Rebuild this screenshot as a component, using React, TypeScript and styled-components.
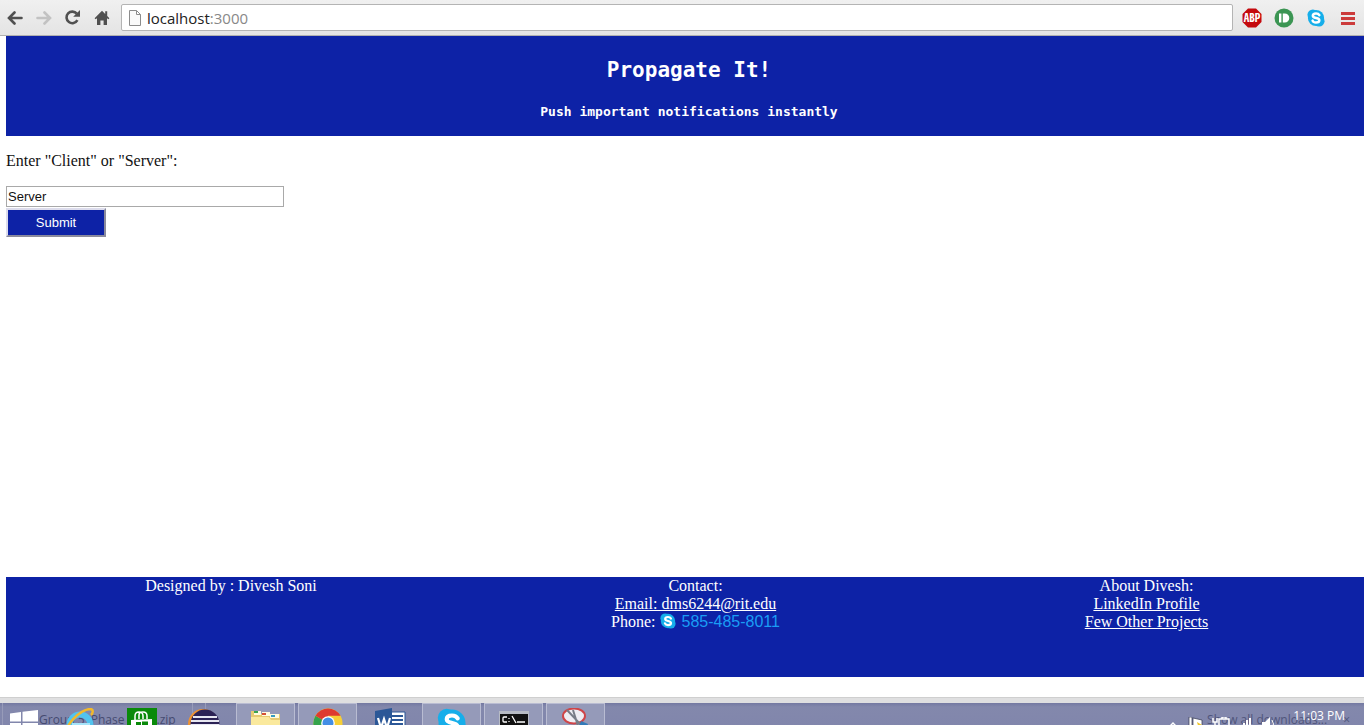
import React from "react";
import styled, { createGlobalStyle } from "styled-components";

const BLUE = "#0d22a6";

const GlobalStyle = createGlobalStyle`
  * { box-sizing: border-box; }
  body {
    margin: 0;
    background: #fff;
    color: #111;
    font: 16px/18px "Liberation Serif", serif;
  }
  svg { display: block; }
`;

const Screen = styled.div`
  display: flex;
  flex-direction: column;
  height: 100vh;
  overflow: hidden;
`;

/* Browser toolbar */
const Toolbar = styled.nav`
  display: flex;
  align-items: center;
  flex: none;
  height: 36px;
  background: linear-gradient(#f0f0f0, #e4e4e4);
  border-bottom: 1px solid #b0b0b0;
`;

const ToolButton = styled.button`
  display: flex;
  align-items: center;
  justify-content: center;
  width: 29px;
  height: 24px;
  padding: 0;
  border: 0;
  background: none;
`;

const AddressBar = styled.div`
  display: flex;
  align-items: center;
  flex: 1;
  height: 27px;
  margin: 0 4px 0 5px;
  padding-left: 7px;
  gap: 6px;
  border: 1px solid #b4b4b4;
  border-radius: 2px;
  background: #fff;
`;

const Address = styled.span`
  flex: 1;
  font: 15px/20px "Open Sans", sans-serif;
  color: #222;
`;

const Port = styled.span`
  color: #888;
`;

const Extensions = styled.div`
  display: flex;
  gap: 3px;
  padding-right: 2px;
`;

/* Web page */
const Page = styled.div`
  display: flex;
  flex-direction: column;
  flex: 1;
  min-height: 0;
  padding: 0 0 20px 6px;
`;

const Banner = styled.header`
  flex: none;
  height: 100px;
  padding: 20px 0 0 8px;
  background: ${BLUE};
  color: #fff;
  text-align: center;
  font-family: "DejaVu Sans Mono", monospace;
`;

const Title = styled.h1`
  margin: 0;
  font-size: 21px;
  line-height: 28px;
  font-weight: 700;
`;

const Tagline = styled.p`
  margin: 18px 0 0;
  font-size: 13px;
  line-height: 20px;
  font-weight: 700;
`;

const Form = styled.form`
  display: flex;
  flex-direction: column;
  align-items: flex-start;
  flex: 1;
  padding-top: 16px;
`;

const RoleInput = styled.input`
  width: 278px;
  height: 21px;
  margin-top: 16px;
  padding: 1px;
  border: 1px solid #a9a9a9;
  font: 13px "Liberation Sans", sans-serif;
  color: #111;
`;

const Submit = styled.button`
  width: 100px;
  height: 29px;
  margin-top: 1px;
  padding: 0;
  border: 2px solid;
  border-color: #dcdcec #8a8a9c #8a8a9c #dcdcec;
  background: ${BLUE};
  color: #fff;
  font: 13px "Liberation Sans", sans-serif;
`;

const Footer = styled.footer`
  display: grid;
  grid-template-columns: 450fr 479fr 423fr;
  flex: none;
  height: 100px;
  padding-right: 6px;
  background: ${BLUE};
  color: #fff;
  text-align: center;
`;

const Column = styled.div`
  display: flex;
  flex-direction: column;
  align-items: center;
`;

const PageLink = styled.a`
  color: #fff;
`;

const PhoneLine = styled.div`
  display: flex;
  gap: 4px;
`;

const PhoneLink = styled.a`
  display: flex;
  gap: 6px;
  color: #1a9cf5;
  font-family: "Liberation Sans", sans-serif;
  text-decoration: none;
`;

/* Download shelf edge and desktop taskbar */
const Shelf = styled.div`
  flex: none;
  height: 6px;
  background: #dfdfe0;
  border-top: 1px solid #cfcfcf;
`;

const Taskbar = styled.footer`
  display: flex;
  position: relative;
  flex: none;
  height: 22px;
  overflow: hidden;
  background: linear-gradient(#7479a2, #8388ac 4px, #8186ac);
  font: 12px/16px "Open Sans", sans-serif;
`;

const ShelfGhost = styled.div`
  position: absolute;
  top: 0;
  left: 2px;
  width: 204px;
  height: 30px;
  padding: 9px 0 0 36px;
  border: 1px solid #979bb9;
  border-top: 0;
  color: #454a70;
  white-space: pre;
  &::after {
    content: "";
    position: absolute;
    top: 0;
    right: 12px;
    height: 30px;
    border-left: 1px solid #979bb9;
  }
`;

const DownloadsGhost = styled.div`
  display: flex;
  position: absolute;
  top: 9px;
  right: 14px;
  gap: 16px;
  color: #50557b;
`;

const Task = styled.button<{ $open?: boolean; $width?: number }>`
  display: flex;
  justify-content: center;
  position: relative;
  flex: none;
  width: ${(p) => p.$width ?? 59}px;
  height: 40px;
  margin: 0 3px 0 0;
  padding: 4px 0 0;
  border: 1px solid ${(p) => (p.$open ? "#b9bcd2" : "transparent")};
  background: ${(p) => (p.$open ? "#959ab9" : "none")};
`;

const Tray = styled.div`
  display: flex;
  position: relative;
  gap: 8px;
  margin-left: auto;
  padding: 5px 19px 0 0;
  color: #fff;
`;

const TrayIcons = styled.svg`
  margin-top: 9px;
`;

const SkypeMark = ({ size }: { size: number }) => (
  <svg width={size} height={size} viewBox="0 0 20 20" aria-hidden="true">
    <circle cx="6.5" cy="6.5" r="6" fill="#16aeea" />
    <circle cx="13.5" cy="13.5" r="6" fill="#16aeea" />
    <circle cx="10" cy="10" r="9" fill="#16aeea" />
    <path
      d="M13.7 6.9C12.9 5.4 11.6 5 10 5 7.8 5 6.5 6 6.5 7.500c0 3.500 7.200 1.500 7.200 5 0 1.700-1.600 2.600-3.700 2.600-1.800 0-3.200-.7-3.800-2.200"
      fill="none"
      stroke="#fff"
      strokeWidth="2.800"
      strokeLinecap="round"
    />
  </svg>
);

const Arrow = ({ color, flip }: { color: string; flip?: boolean }) => (
  <svg width="16" height="14" viewBox="0 0 16 14" fill="none" stroke={color} aria-hidden="true">
    <path
      d={flip ? "M1.5 7h12M8.5 1.5 14 7l-5.5 5.5" : "M14.5 7h-12M7.5 1.5 2 7l5.5 5.5"}
      strokeWidth="2.6"
      strokeLinecap="round"
    />
  </svg>
);

export default function App() {
  return (
    <>
      <GlobalStyle />
      <Screen>
        <Toolbar>
          <ToolButton aria-label="Back"><Arrow color="#505050" /></ToolButton>
          <ToolButton aria-label="Forward" disabled><Arrow color="#c2c2c2" flip /></ToolButton>
          <ToolButton aria-label="Reload">
            <svg width="17" height="17" viewBox="0 0 17 17" aria-hidden="true">
              <path d="M13.4 11.2A5.8 5.8 0 1 1 12.8 4.7" fill="none" stroke="#505050" strokeWidth="2.6" />
              <path d="M16 1v6.8H9.2Z" fill="#505050" />
            </svg>
          </ToolButton>
          <ToolButton aria-label="Home">
            <svg width="16" height="16" viewBox="0 0 16 16" fill="#505050" aria-hidden="true">
              <path d="M8 .8 11.2 4V1.3h2V6l2.2 2.300-1 1L13 8.200V15H9.600v-4.500H6.400V15H3V8.200L1.600 9.300l-1-1Z" />
            </svg>
          </ToolButton>
          <AddressBar>
            <svg width="12" height="16" viewBox="0 0 12 16" fill="#fafafa" stroke="#8c8c8c" aria-hidden="true">
              <path d="M.5.5h7l4 4v11H.5ZM7.5.5v4h4" />
            </svg>
            <Address>localhost<Port>:3000</Port></Address>
          </AddressBar>
          <Extensions>
            <ToolButton aria-label="Adblock Plus">
              <svg width="20" height="20" viewBox="0 0 20 20" aria-hidden="true">
                <path d="M6 .5h8L19.5 6v8L14 19.5H6L.5 14V6Z" fill="#c4090d" />
                <text
                  x="10"
                  y="14"
                  fill="#fff"
                  fontSize="11"
                  fontWeight="700"
                  textAnchor="middle"
                  fontFamily="Noto Sans CJK JP, sans-serif"
                  style={{ fontFeatureSettings: '"hwid"' }}
                >
                  ABP
                </text>
              </svg>
            </ToolButton>
            <ToolButton aria-label="Pushbullet">
              <svg width="20" height="20" viewBox="0 0 20 20" aria-hidden="true">
                <circle cx="10" cy="10" r="9.5" fill="#3b9553" />
                <path d="M5 5.500h2.400v9H5ZM8.800 5.500h2a4.500 4.500 0 0 1 0 9h-2Z" fill="#fff" />
              </svg>
            </ToolButton>
            <ToolButton aria-label="Skype"><SkypeMark size={18} /></ToolButton>
            <ToolButton aria-label="Menu">
              <svg width="14" height="14" viewBox="0 0 14 14" fill="#cc3b3b" aria-hidden="true">
                <path d="M0 1h14v3H0ZM0 6h14v3H0ZM0 11h14v3H0Z" />
              </svg>
            </ToolButton>
          </Extensions>
        </Toolbar>

        <Page>
          <Banner>
            <Title>Propagate It!</Title>
            <Tagline>Push important notifications instantly</Tagline>
          </Banner>
          <Form onSubmit={(e) => e.preventDefault()}>
            <label htmlFor="role">Enter "Client" or "Server":</label>
            <RoleInput id="role" type="text" defaultValue="Server" />
            <Submit type="submit">Submit</Submit>
          </Form>
          <Footer>
            <Column>Designed by : Divesh Soni</Column>
            <Column>
              <span>Contact:</span>
              <PageLink href="mailto:dms6244@rit.edu">Email: dms6244@rit.edu</PageLink>
              <PhoneLine>
                Phone:
                <PhoneLink href="tel:585-485-8011"><SkypeMark size={16} />585-485-8011</PhoneLink>
              </PhoneLine>
            </Column>
            <Column>
              <span>About Divesh:</span>
              <PageLink href="#linkedin">LinkedIn Profile</PageLink>
              <PageLink href="#projects">Few Other Projects</PageLink>
            </Column>
          </Footer>
        </Page>

        <Shelf />
        <Taskbar>
          <ShelfGhost>Group 5  Phase 2 .......zip</ShelfGhost>
          <DownloadsGhost><span>Show all downloads...</span><span>×</span></DownloadsGhost>
          <Task $width={47} aria-label="Start">
            <svg width="28" height="28" viewBox="0 0 28 28" fill="#fff" aria-hidden="true">
              <path d="M0 5.500 11 4v9.500H0ZM12.500 3.800 28 2v11.500H12.500ZM0 15h11v9.500L0 23ZM12.500 15H28v11l-15.500-2Z" />
            </svg>
          </Task>
          <Task aria-label="Internet Explorer">
            <svg width="32" height="32" viewBox="0 0 32 32" fill="none" aria-hidden="true">
              <circle cx="16" cy="17" r="10.5" stroke="#52c3ee" strokeWidth="6" />
              <path d="M8 17h18" stroke="#a6e4fa" strokeWidth="4" />
              <path d="M3 27C0 17 16 2 26 1c4 0 3 4 1 6" stroke="#f2b92c" strokeWidth="2.5" />
            </svg>
          </Task>
          <Task aria-label="Store">
            <svg width="30" height="30" viewBox="0 0 30 30" aria-hidden="true">
              <path d="M0 0h30v30H0Z" fill="#0a8a0a" />
              <path d="M4 12l21-1v16L4 25Z" fill="#fff" />
              <path d="M8 12V8q0-4 4-4t4 4v3M12 11V7q0-3 4-3t4 4v3" fill="none" stroke="#fff" strokeWidth="1.5" />
              <path d="M9 14h5v4H9ZM15 13.500h6V18h-6Z" fill="#0a8a0a" />
            </svg>
          </Task>
          <Task aria-label="Eclipse">
            <svg width="32" height="32" viewBox="0 0 32 32" aria-hidden="true">
              <circle cx="15" cy="16" r="15" fill="#ef9230" />
              <circle cx="17" cy="16" r="14.5" fill="#2c2255" />
              <path d="M5 9h24M3 13h28M2.500 17h29" stroke="#e7e7f1" strokeWidth="2" />
            </svg>
          </Task>
          <Task $open aria-label="File Explorer">
            <svg width="32" height="32" viewBox="0 0 32 32" aria-hidden="true">
              <path d="M1 3h8l2 3h19v25H1Z" fill="#e6ca72" />
              <path d="M4 3h7v4H4ZM12 4h8v4h-8ZM20 6h9v4h-9Z" fill="#fffbe0" />
              <path d="M4 3h4v2H4Z" fill="#39a550" />
              <path d="M12 5h4v2h-4Z" fill="#d45036" />
              <path d="M21 7h4v2h-4Z" fill="#379bc0" />
              <path d="M1 9h18l2 3h9v19H1Z" fill="#fae99d" />
            </svg>
          </Task>
          <Task $open aria-label="Chrome">
            <svg width="30" height="30" viewBox="0 0 30 30" aria-hidden="true">
              <circle cx="15" cy="15" r="14.5" fill="#f7cf35" />
              <path d="M15 15 2.500 7.700A14.500 14.500 0 0 0 15 29.500Z" fill="#35a34c" />
              <path d="M15 15 2.500 7.700A14.500 14.500 0 0 1 27.600 7.700H15Z" fill="#de3a30" />
              <circle cx="15" cy="15" r="6.8" fill="#fff" />
              <circle cx="15" cy="15" r="5.5" fill="#438ee5" />
            </svg>
          </Task>
          <Task aria-label="Word">
            <svg width="32" height="32" viewBox="0 0 32 32" aria-hidden="true">
              <path d="M17 4h14v25H17Z" fill="#fff" stroke="#2b5797" />
              <path d="M18 8h11M18 12h11M18 16h11M18 20h11" stroke="#2b5797" strokeWidth="2" />
              <path d="M1 3 18 0v32L1 29Z" fill="#2b5797" />
              <path d="m4 10 3 10 3-9 3 9 3-10" fill="none" stroke="#fff" strokeWidth="2.2" />
            </svg>
          </Task>
          <Task $open aria-label="Skype"><SkypeMark size={30} /></Task>
          <Task $open aria-label="Command Prompt">
            <svg width="30" height="30" viewBox="0 0 30 30" aria-hidden="true">
              <path d="M0 3h30v24H0Z" fill="#b7bbc4" />
              <path d="M1 6h28v20H1Z" fill="#111" />
              <path d="M8 9H5q-1 0-1 1v3q0 1 1 1h3M10 10v1M10 13v1M13 8l4 7M18 14h8" fill="none" stroke="#fff" strokeWidth="1.3" />
            </svg>
          </Task>
          <Task $open aria-label="Snipping Tool">
            <svg width="30" height="30" viewBox="0 0 30 30" aria-hidden="true">
              <ellipse cx="13" cy="8" rx="11" ry="7.5" fill="#eeeef3" stroke="#cf4548" strokeWidth="2" />
              <path d="m6 2 15 16M12 2l5 16" stroke="#777d87" strokeWidth="2" />
              <path d="m20 13 7 3-3 8-6-6Z" fill="#327ab8" />
            </svg>
          </Task>
          <Tray>
            <TrayIcons width="116" height="18" viewBox="0 0 116 18" fill="#fff" aria-hidden="true">
              <path d="m0 9 4-4 4 4H6L4 7 2 9Z" />
              <path d="M20 0h3v10h-3ZM24 1l9 2v7h-9Z" stroke="#30344e" strokeWidth=".7" />
              <path d="m28 5 5 3-3 4Z" fill="#f0c629" />
              <path d="M44 1v4h4V1M46 5v6M50 2h10v10H50ZM53 0h4v2h-4Z" fill="none" stroke="#fff" strokeWidth="1.5" />
              <path d="M71 8h2v6h-2ZM74 6h2v8h-2ZM77 3h2v11h-2ZM80 1h2v13h-2ZM93 5h3l5-5v14l-5-4h-3Z" />
              <path d="M103 3q3 4 0 8" fill="none" stroke="#fff" />
            </TrayIcons>
            <span>11:03 PM</span>
          </Tray>
        </Taskbar>
      </Screen>
    </>
  );
}
